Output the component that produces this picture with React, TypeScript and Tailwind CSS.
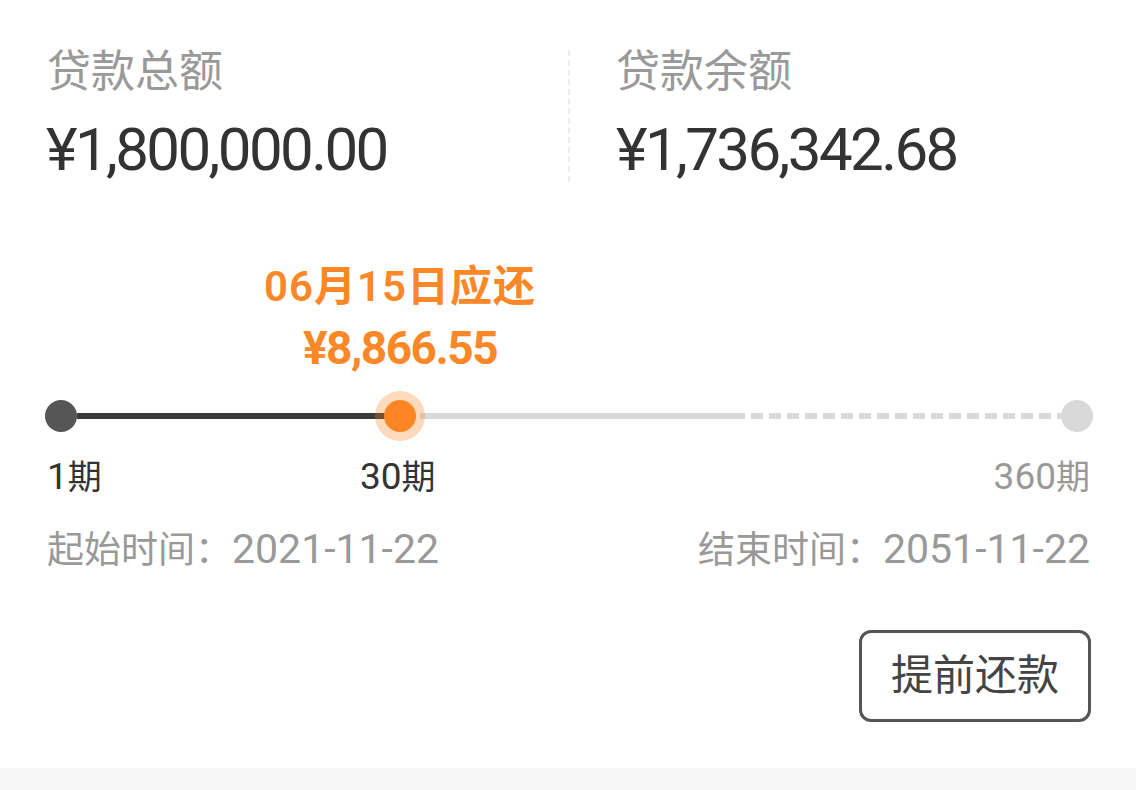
import React from "react";

const CJK = { fontFamily: '"Roboto", "Noto Sans CJK SC", sans-serif' };

export default function App() {
  return (
    <div className="w-[1136px] h-[790px] bg-white flex flex-col overflow-hidden" style={CJK}>
      {/* Top summary */}
      <div className="flex pl-[47px] pt-[50px] h-[184px]">
        <div className="w-[521px] flex flex-col">
          <div className="text-[44px] leading-[44px] text-[#999999]">贷款总额</div>
          <div className="text-[60px] leading-[60px] font-normal tracking-[-2.6px] text-[#333333] mt-[26px] -ml-[1px]">
            ¥1,800,000.00
          </div>
        </div>
        <div className="w-0 h-[132px] border-l-2 border-dashed border-[#ececec]" />
        <div className="flex flex-col pl-[47px]">
          <div className="text-[44px] leading-[44px] text-[#999999] -ml-[1px]">贷款余额</div>
          <div className="text-[60px] leading-[60px] font-normal tracking-[-2.6px] text-[#333333] mt-[26px] -ml-[1px]">
            ¥1,736,342.68
          </div>
        </div>
      </div>

      {/* Timeline */}
      <div className="flex flex-col pl-[45px] mt-[82px]">
        <div className="w-[320px] ml-[195px] flex flex-col items-center text-[#fa8828] font-semibold">
          <div className="text-[42px] leading-[42px] tracking-[1px]">06月15日应还</div>
          <div className="font-bold text-[46px] leading-[46px] tracking-[-1.5px] mt-[17px]">
            ¥8,866.55
          </div>
        </div>
        <div className="flex items-center h-[50px] mt-[20px]">
          <div className="w-[32px] h-[32px] rounded-full bg-[#565656] shrink-0" />
          <div className="w-[310px] h-[6px] bg-[#3a3a3a] shrink-0" />
          <div className="w-[50px] h-[50px] rounded-full bg-[#fd8524]/30 flex items-center justify-center shrink-0 -ml-[12px] relative">
            <div className="w-[32px] h-[32px] rounded-full bg-[#fd8524]" />
          </div>
          <div className="w-[325px] h-[6px] bg-[#d9d9d9] -ml-[5px] shrink-0" />
          <svg width="316" height="6" className="shrink-0">
            <line x1="6" y1="3" x2="316" y2="3" stroke="#d9d9d9" strokeWidth="6" strokeDasharray="12 6" />
          </svg>
          <div className="w-[32px] h-[32px] rounded-full bg-[#d9d9d9] shrink-0" />
        </div>
      </div>

      <div className="flex items-center pl-[47px] pr-[46px] mt-[19px] text-[34px] leading-[34px]">
        <div className="w-[313px] text-[#333333]">
          <span className="text-[37px]">1</span>期
        </div>
        <div className="text-[#333333]">
          <span className="text-[37px]">30</span>期
        </div>
        <div className="ml-auto text-[#999999]">
          <span className="text-[37px]">360</span>期
        </div>
      </div>

      <div className="flex items-center justify-between pl-[47px] pr-[46px] mt-[35px] text-[37px] leading-[40px] text-[#999999]">
        <div>
          起始时间：<span className="text-[41px]">2021-11-22</span>
        </div>
        <div>
          结束时间：<span className="text-[41px]">2051-11-22</span>
        </div>
      </div>

      <div className="flex justify-end pr-[45px] mt-[59px]">
        <button className="w-[232px] h-[92px] border-[3px] border-[#555555] rounded-[12px] text-[42px] leading-[42px] text-[#444444] flex items-center justify-center bg-white">
          提前还款
        </button>
      </div>

      <div className="mt-auto h-[22px] bg-[#f6f6f6]" />
    </div>
  );
}
